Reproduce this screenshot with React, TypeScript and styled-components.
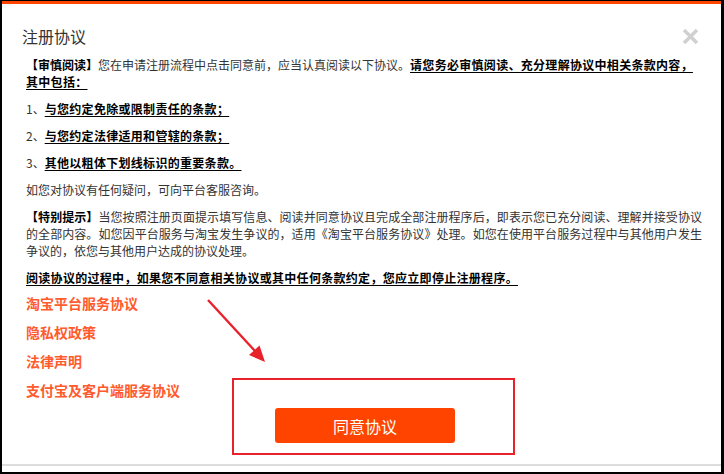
import * as React from 'react';
import styled, { createGlobalStyle } from 'styled-components';

const GlobalStyle = createGlobalStyle`
    html, body {
        margin: 0;
        height: 474px;
        overflow: hidden;
        background: #000;
    }
    body {
        font-family: "Noto Sans CJK SC", "Liberation Sans", sans-serif;
    }
`;

const Page = styled.div`
    position: relative;
    padding: 1px 3px 0 2px;
`;

const Modal = styled.div`
    background: #fff;
    border-top: 3px solid #ff4400;
    padding-bottom: 6px;
`;

const Header = styled.div`
    display: flex;
    justify-content: space-between;
    align-items: center;
    padding: 22px 22px 0 20px;
`;

const Title = styled.h2`
    margin: 0;
    font-size: 16px;
    line-height: 20px;
    font-weight: normal;
    color: #333;
`;

const CloseButton = styled.button`
    display: flex;
    padding: 0;
    border: none;
    background: none;
    cursor: pointer;
`;

const Content = styled.div`
    width: 676px;
    padding: 10px 0 0 24px;
`;

const Paragraph = styled.p`
    margin: 0;
    font-size: 12px;
    line-height: 17px;
    color: #333;
    text-align: justify;
    & + & {
        margin-top: 10px;
    }
`;

const Strong = styled.b`
    color: #000;
`;

const Underlined = styled.b`
    color: #000;
    letter-spacing: 0.3px;
    text-decoration: underline;
    text-underline-offset: 2px;
`;

const LinkList = styled.div`
    margin-top: 3px;
`;

const AgreementLink = styled.a`
    display: block;
    font-size: 14px;
    line-height: 29px;
    font-weight: 600;
    color: #ff5b2d;
    text-decoration: none;
`;

const Footer = styled.div`
    display: flex;
    justify-content: center;
    padding: 3px 0 21px 7px;
    border-bottom: 2px solid #ddd;
`;

const AgreeButton = styled.button`
    width: 180px;
    height: 35px;
    border: none;
    border-radius: 3px;
    background: #ff4400;
    color: #fff;
    font-family: inherit;
    font-size: 16px;
    cursor: pointer;
`;

const Annotations = styled.svg`
    position: absolute;
    top: 0;
    left: 0;
    pointer-events: none;
`;

const links = ['淘宝平台服务协议', '隐私权政策', '法律声明', '支付宝及客户端服务协议'];

const items = [
    '与您约定免除或限制责任的条款；',
    '与您约定法律适用和管辖的条款；',
    '其他以粗体下划线标识的重要条款。'
];

const ANNOTATION_RED = '#e8212b';

export default function App() {
    return (
        <Page>
            <GlobalStyle />
            <Modal>
                <Header>
                    <Title>注册协议</Title>
                    <CloseButton aria-label="关闭">
                        <svg width="17" height="17" viewBox="0 0 17 17">
                            <path d="M2 2 L15 15 M15 2 L2 15" stroke="#d0d0d0" strokeWidth="3.4" />
                        </svg>
                    </CloseButton>
                </Header>
                <Content>
                    <Paragraph>
                        <Strong>【审慎阅读】</Strong>您在申请注册流程中点击同意前，应当认真阅读以下协议。
                        <Underlined>请您务必审慎阅读、充分理解协议中相关条款内容，<br />其中包括：</Underlined>
                    </Paragraph>
                    {items.map((item, i) => (
                        <Paragraph key={item}>
                            {i + 1}、<Underlined>{item}</Underlined>
                        </Paragraph>
                    ))}
                    <Paragraph>如您对协议有任何疑问，可向平台客服咨询。</Paragraph>
                    <Paragraph>
                        <Strong>【特别提示】</Strong>当您按照注册页面提示填写信息、阅读并同意协议且完成全部注册程序后，即表示您已充分阅读、理解并接受协议的全部内容。如您因平台服务与淘宝发生争议的，适用《淘宝平台服务协议》处理。如您在使用平台服务过程中与其他用户发生争议的，依您与其他用户达成的协议处理。
                    </Paragraph>
                    <Paragraph>
                        <Underlined>阅读协议的过程中，如果您不同意相关协议或其中任何条款约定，您应立即停止注册程序。</Underlined>
                    </Paragraph>
                    <LinkList>
                        {links.map((l) => (
                            <AgreementLink href="#" key={l}>{l}</AgreementLink>
                        ))}
                    </LinkList>
                </Content>
                <Footer>
                    <AgreeButton>同意协议</AgreeButton>
                </Footer>
            </Modal>
            <Annotations width="724" height="474">
                <rect x="233" y="379" width="281" height="75" fill="none" stroke={ANNOTATION_RED} strokeWidth="2" />
                <line x1="208" y1="300" x2="255" y2="351" stroke={ANNOTATION_RED} strokeWidth="2.4" />
                <polygon points="265,362 249,355 259.5,345.5" fill={ANNOTATION_RED} />
            </Annotations>
        </Page>
    );
}
